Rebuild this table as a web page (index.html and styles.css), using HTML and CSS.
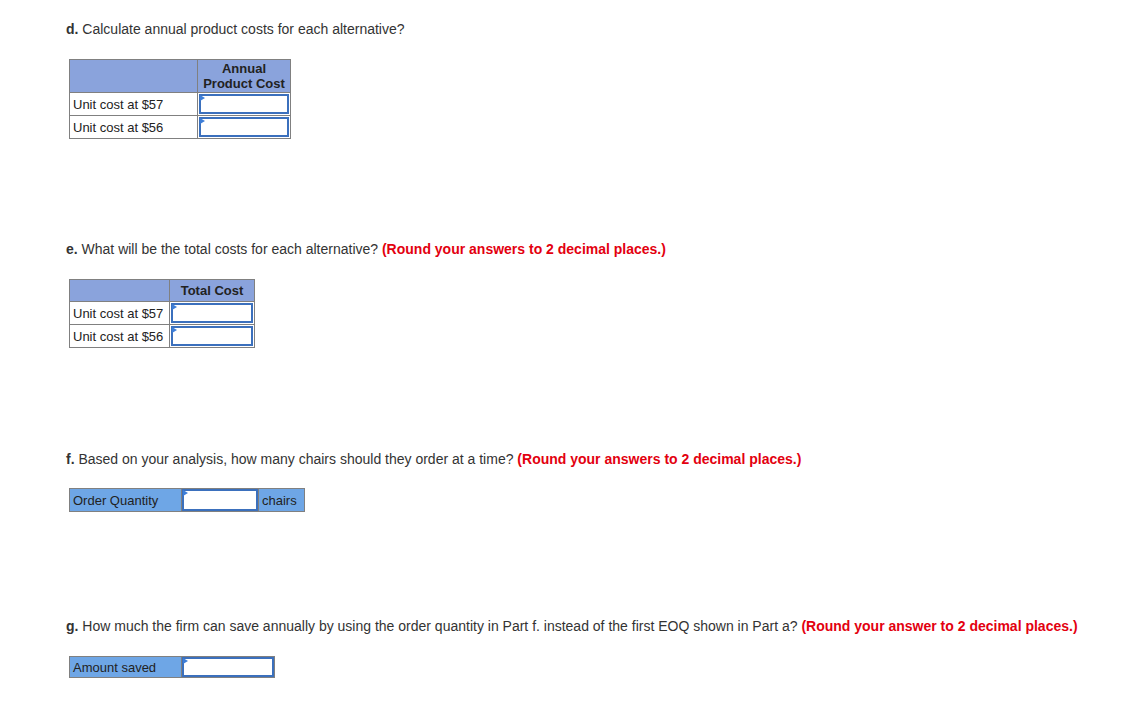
FILE: index.html
```html
<!DOCTYPE html>
<html>
<head>
<meta charset="utf-8">
<link rel="stylesheet" href="styles.css">
</head>
<body>
<div class="page">
  <p class="q q-d"><b>d.</b> Calculate annual product costs for each alternative?</p>
  <table class="grid grid-d">
    <tr class="head"><th class="lbl"></th><th class="val">Annual<br>Product Cost</th></tr>
    <tr><td class="lbl">Unit cost at $57</td><td class="inp"><div class="box"><span class="flag"></span></div></td></tr>
    <tr><td class="lbl">Unit cost at $56</td><td class="inp"><div class="box"><span class="flag"></span></div></td></tr>
  </table>

  <p class="q q-e"><b>e.</b> What will be the total costs for each alternative? <span class="red">(Round your answers to 2 decimal places.)</span></p>
  <table class="grid grid-e">
    <tr class="head"><th class="lbl"></th><th class="val">Total Cost</th></tr>
    <tr><td class="lbl">Unit cost at $57</td><td class="inp"><div class="box"><span class="flag"></span></div></td></tr>
    <tr><td class="lbl">Unit cost at $56</td><td class="inp"><div class="box"><span class="flag"></span></div></td></tr>
  </table>

  <p class="q q-f"><b>f.</b> Based on your analysis, how many chairs should they order at a time? <span class="red">(Round your answers to 2 decimal places.)</span></p>
  <table class="grid single order">
    <tr><td class="blue lbl2">Order Quantity</td><td class="inp w76"><div class="box"><span class="flag"></span></div></td><td class="blue unit">chairs</td></tr>
  </table>

  <p class="q q-g"><b>g.</b> How much the firm can save annually by using the order quantity in Part f. instead of the first EOQ shown in Part a? <span class="red">(Round your answer to 2 decimal places.)</span></p>
  <table class="grid single saved">
    <tr><td class="blue lbl2">Amount saved</td><td class="inp w92"><div class="box"><span class="flag"></span></div></td></tr>
  </table>
</div>
</body>
</html>
```

FILE: styles.css
```css
html, body {
  margin: 0;
  padding: 0;
  background: #ffffff;
}
body {
  font-family: "Liberation Sans", Arial, sans-serif;
  color: #333333;
}
.page {
  padding: 21px 0 0 66px;
}
.q {
  margin: 0;
  font-size: 14px;
  line-height: 17px;
  white-space: nowrap;
}
.q b {
  font-weight: bold;
}
.red {
  color: #e3000f;
  font-weight: bold;
}
.grid {
  border-collapse: collapse;
  margin-left: 3px;
  font-size: 13px;
  line-height: 15px;
  color: #222222;
}
.grid td, .grid th {
  border: 1px solid #808080;
  padding: 0;
}
.grid-d { margin-top: 21px; }
.grid-e { margin-top: 21px; }
.q-e { margin-top: 102px; }
.q-f { margin-top: 103px; }
.q-g { margin-top: 106px; }
.order { margin-top: 20px; }
.saved { margin-top: 21px; }

.head th {
  background: #8aa3dc;
  font-weight: bold;
  color: #222222;
  text-align: center;
  line-height: 15px;
}
.grid-d .head th { height: 32px; }
.grid-e .head th { height: 21px; }
.grid-d .lbl { width: 124px; }
.grid-d .val { width: 92px; }
.grid-e .lbl { width: 96px; }
.grid-e .val { width: 84px; }
.grid td.lbl {
  height: 22px;
  padding-left: 3px;
  text-align: left;
  white-space: nowrap;
}
.grid td.inp {
  padding: 1px;
  vertical-align: top;
}
.box {
  position: relative;
  box-sizing: border-box;
  height: 20px;
  border: 2px solid #3b70bd;
  background: #ffffff;
}
.flag {
  position: absolute;
  left: -1px;
  top: -1px;
  width: 0;
  height: 0;
  border-top: 3px solid transparent;
  border-bottom: 3px solid transparent;
  border-left: 5px solid #3d7ed8;
}
.grid td.blue {
  background: #6ea6e6;
  height: 22px;
  padding-left: 3px;
  white-space: nowrap;
}
.grid td.lbl2 { width: 108px; }
.grid td.unit { width: 42px; }
.single td.inp { padding: 0; }
.single .box { height: 22px; }
.w76 { width: 76px; }
.w92 { width: 92px; }
.saved td.blue { height: 20px; }
.saved .box { height: 20px; }
```
